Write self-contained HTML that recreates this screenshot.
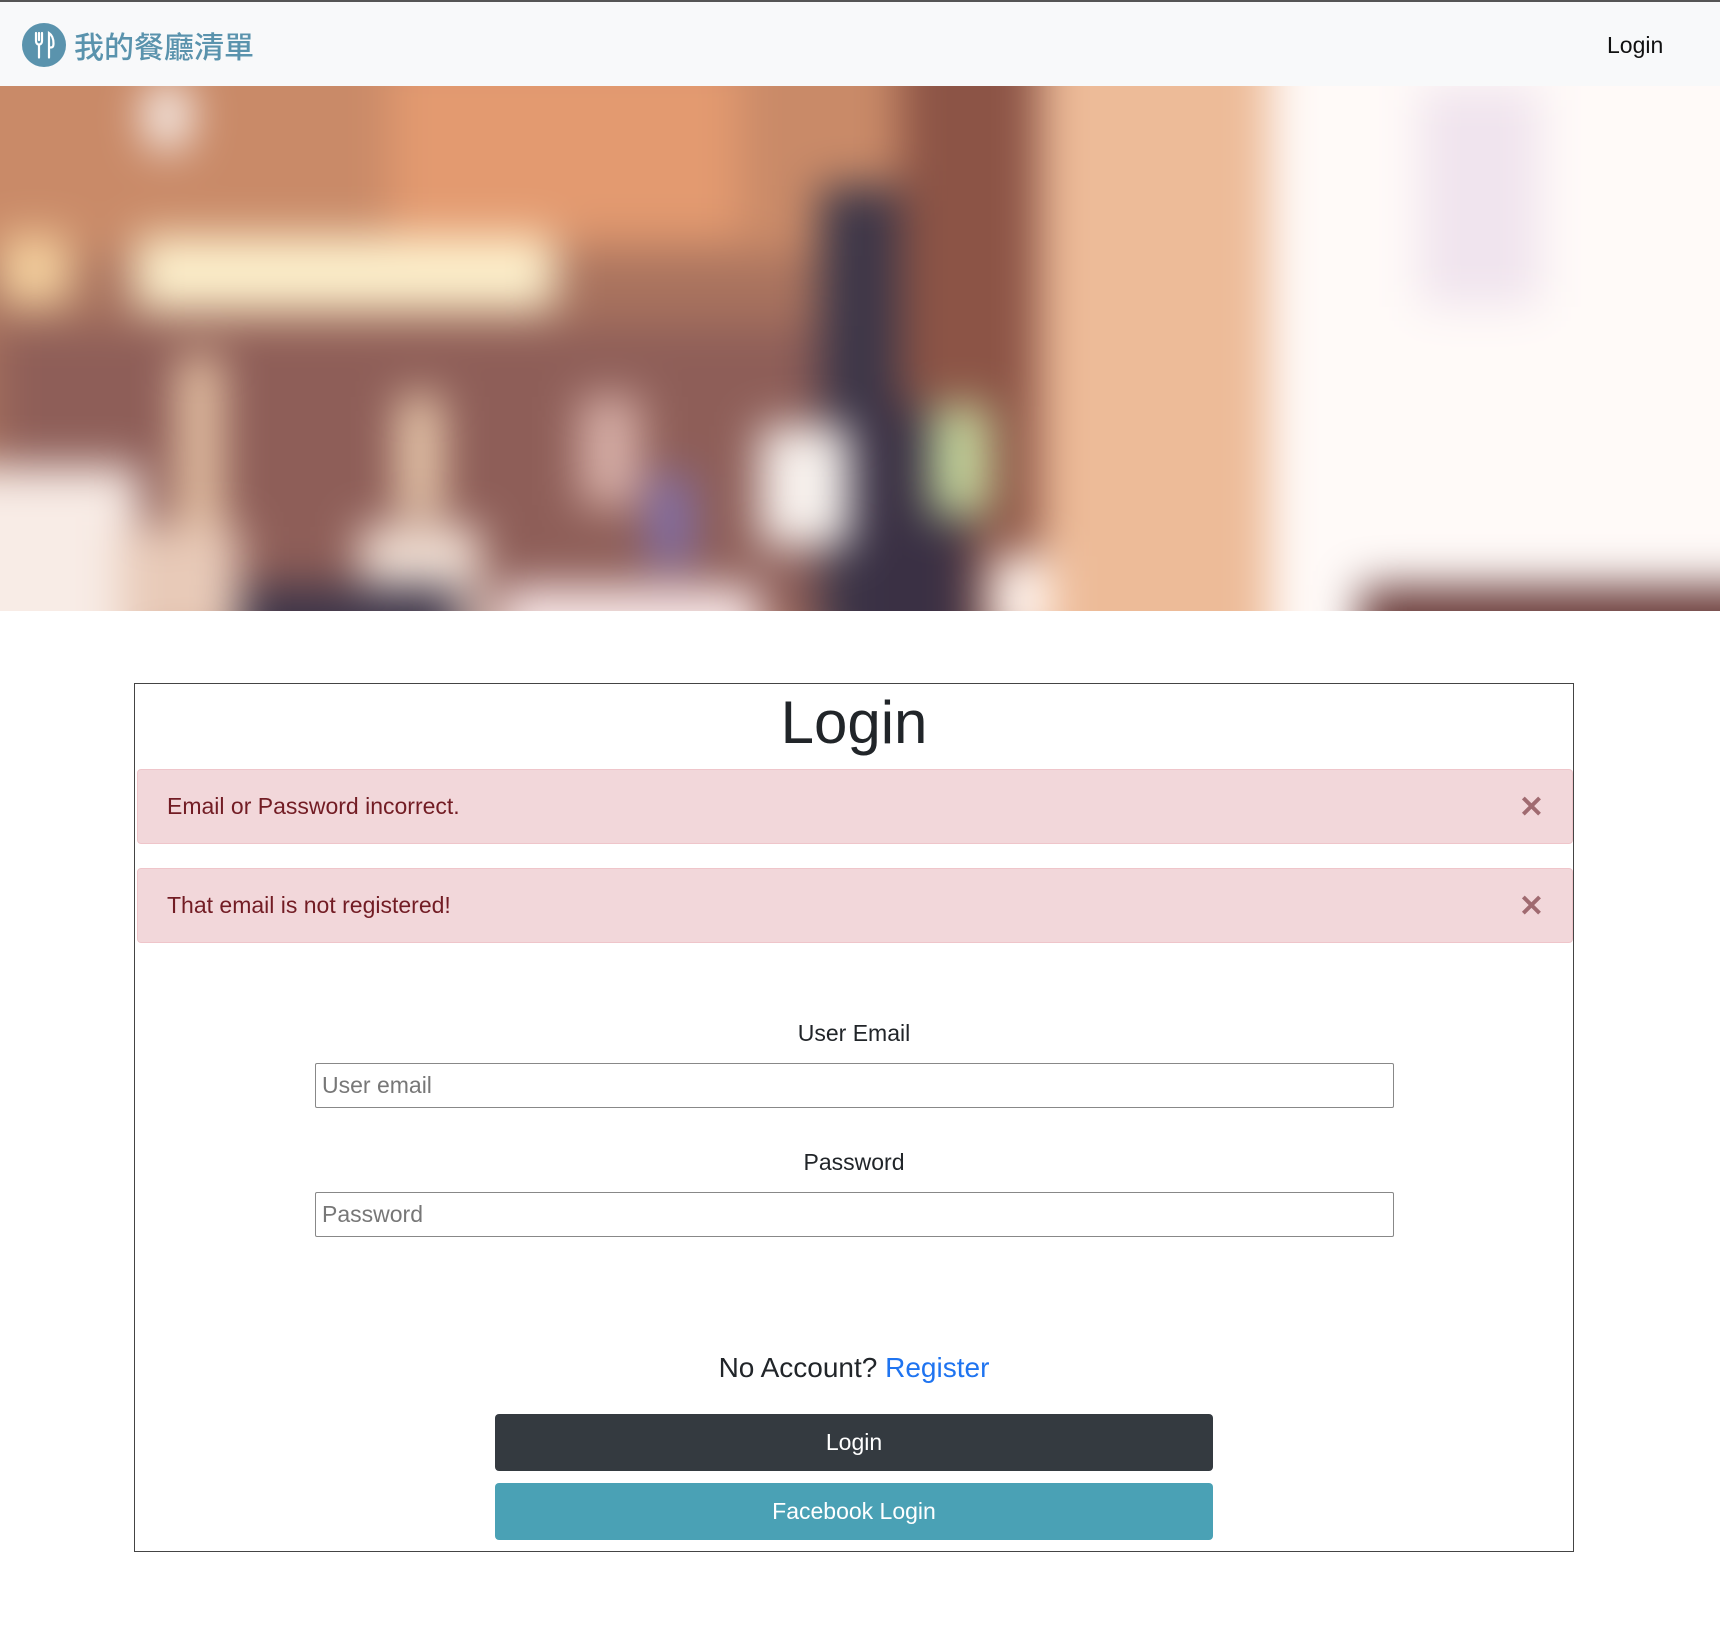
<!DOCTYPE html>
<html><head><meta charset="utf-8"><style>
*{box-sizing:border-box;margin:0;padding:0}
body{width:1720px;height:1642px;background:#fff;font-family:"Liberation Sans","Noto Sans CJK TC",sans-serif;color:#212529;position:relative;overflow:hidden}
.topline{position:absolute;left:0;top:0;width:1720px;height:2px;background:#555}
nav{position:absolute;left:0;top:2px;width:1720px;height:84px;background:#f8f9fa}
.logo{position:absolute;left:22px;top:21px;width:44px;height:44px;border-radius:50%;background:#5a93ad}
.brand{position:absolute;left:74px;top:24px;font-size:30px;color:#5a93ad;font-family:"Noto Sans CJK TC",sans-serif;line-height:38px;font-weight:500}
.navlogin{position:absolute;left:1607px;top:30px;font-size:23px;color:#111}
.hero{position:absolute;left:0;top:86px;width:1720px;height:525px;overflow:hidden;background:#b7826c}
.hero .in{position:absolute;left:-60px;top:-60px;width:1840px;height:645px;filter:blur(22px)}
.b{position:absolute}
.box{position:absolute;left:134px;top:683px;width:1440px;height:869px;border:1px solid #444}
h1{position:absolute;left:0;width:100%;top:3px;text-align:center;font-size:60px;font-weight:500;line-height:72px;color:#212529}
.alert{position:absolute;left:2px;width:1436px;height:75px;background:#f2d7da;border:1px solid #efc5ca;border-radius:4px;color:#721c24;font-size:23px;line-height:73px;padding-left:29px}
.alert .x{position:absolute;right:28px;top:1px;font-size:30px;color:#a06a70;font-weight:bold}
.lbl{position:absolute;left:0;width:100%;text-align:center;font-size:23px;color:#212529}
.inp{position:absolute;left:180px;width:1079px;height:45px;border:1px solid #888;border-radius:2px;font-size:23px;color:#777;line-height:43px;padding-left:6px}
.noacc{position:absolute;left:0;width:100%;text-align:center;font-size:28px;color:#212529}
.noacc span{color:#1f74f0}
.btn{position:absolute;left:360px;width:718px;height:57px;border-radius:4px;color:#fff;font-size:23px;text-align:center;line-height:57px}
</style></head><body>
<div class="topline"></div>
<nav>
<div class="logo"><svg width="44" height="44" viewBox="0 0 44 44"><g fill="none" stroke="#fff" stroke-width="2.2" stroke-linecap="round"><path d="M14 10v8c0 2.5 1.5 3.5 3 3.5v13M20 10v8c0 2.5-1.5 3.5-3 3.5M17 10v7"/><path d="M27 34.5V10c3 2 4.5 6 4.5 10.5s-2 4-4.5 4"/></g></svg></div>
<div class="brand">我的餐廳清單</div>
<div class="navlogin">Login</div>
</nav>
<div class="hero"><div class="in">
<div class="b" style="left:0;top:0;width:1840px;height:700px;background:#a8725e"></div>
<div class="b" style="left:0;top:0;width:1150px;height:230px;background:#c98a68"></div>
<div class="b" style="left:450px;top:30px;width:350px;height:180px;background:#e39a70"></div>
<div class="b" style="left:205px;top:55px;width:45px;height:70px;background:#fff;border-radius:50%"></div>
<div class="b" style="left:60px;top:210px;width:70px;height:70px;background:#f6d3a0"></div>
<div class="b" style="left:195px;top:210px;width:420px;height:75px;background:#fdf0cc"></div>
<div class="b" style="left:60px;top:300px;width:820px;height:300px;background:#8e5e58"></div>
<div class="b" style="left:240px;top:330px;width:40px;height:170px;background:#f1cfae"></div>
<div class="b" style="left:460px;top:370px;width:40px;height:120px;background:#f5d8b8"></div>
<div class="b" style="left:640px;top:370px;width:60px;height:110px;background:#d8b0a8"></div>
<div class="b" style="left:710px;top:450px;width:40px;height:90px;background:#7f6fb0"></div>
<div class="b" style="left:880px;top:160px;width:80px;height:470px;background:#3c3648"></div>
<div class="b" style="left:960px;top:0;width:140px;height:700px;background:#8c5446"></div>
<div class="b" style="left:1100px;top:0;width:230px;height:700px;background:#edbb98"></div>
<div class="b" style="left:1330px;top:0;width:510px;height:700px;background:#fffaf8"></div>
<div class="b" style="left:1480px;top:60px;width:120px;height:220px;background:#f0e4ee"></div>
<div class="b" style="left:0;top:440px;width:200px;height:260px;background:#f8ece6"></div>
<div class="b" style="left:180px;top:500px;width:120px;height:120px;background:#e8cab8"></div>
<div class="b" style="left:420px;top:500px;width:120px;height:140px;background:#f4e2d6"></div>
<div class="b" style="left:300px;top:560px;width:220px;height:160px;background:#3c3448"></div>
<div class="b" style="left:820px;top:400px;width:90px;height:120px;background:#f8f2ee"></div>
<div class="b" style="left:920px;top:380px;width:110px;height:320px;background:#3a3044"></div>
<div class="b" style="left:990px;top:380px;width:60px;height:110px;background:#c4d69c"></div>
<div class="b" style="left:560px;top:560px;width:260px;height:140px;background:#f6e4e4"></div>
<div class="b" style="left:1050px;top:530px;width:60px;height:90px;background:#fff4ee"></div>
<div class="b" style="left:1420px;top:560px;width:420px;height:140px;background:#6a3c3a"></div>
</div></div>

<div class="box">
<h1>Login</h1>
<div class="alert" style="top:85px">Email or Password incorrect.<span class="x">✕</span></div>
<div class="alert" style="top:184px">That email is not registered!<span class="x">✕</span></div>
<div class="lbl" style="top:336px">User Email</div>
<div class="inp" style="top:379px">User email</div>
<div class="lbl" style="top:465px">Password</div>
<div class="inp" style="top:508px">Password</div>
<div class="noacc" style="top:668px">No Account? <span>Register</span></div>
<div class="btn" style="top:730px;background:#343a40">Login</div>
<div class="btn" style="top:799px;background:#4aa1b5">Facebook Login</div>
</div>
</body></html>
